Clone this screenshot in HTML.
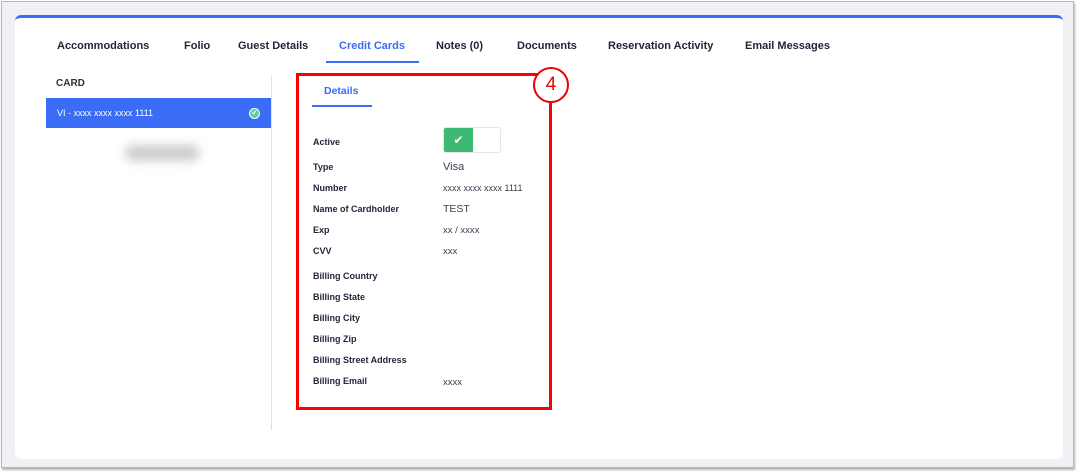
<!DOCTYPE html>
<html><head><style>
*{margin:0;padding:0;box-sizing:border-box}
body{width:1077px;height:472px;background:#fff;font-family:"Liberation Sans",sans-serif;position:relative;overflow:hidden;color:#1e2538}
.frame{position:absolute;left:1px;top:1px;width:1073px;height:467px;background:#f0f1f4;border:1px solid #b8b8b8;box-shadow:1px 2px 2px rgba(0,0,0,.3)}
.card{position:absolute;left:15px;top:15px;width:1048px;height:444px;background:#fff;border-top:3px solid #3b6cf6;border-radius:6px}
.a{position:absolute;white-space:nowrap}
.tab{font-size:11px;font-weight:bold;top:40px;color:#1e2538}
.lbl{font-size:9px;font-weight:bold;left:313px;color:#1e2538}
.val{font-size:9.5px;left:443px;color:#3a4050}
</style></head><body>
<div class="frame"></div>
<div class="card"></div>
<div class="a tab" style="left:57px">Accommodations</div>
<div class="a tab" style="left:184px">Folio</div>
<div class="a tab" style="left:238px">Guest Details</div>
<div class="a tab" style="left:339px;color:#3b6cf6">Credit Cards</div>
<div class="a" style="left:326px;top:61px;width:93px;height:2px;background:#3b6cf6"></div>
<div class="a tab" style="left:436px">Notes (0)</div>
<div class="a tab" style="left:517px">Documents</div>
<div class="a tab" style="left:608px">Reservation Activity</div>
<div class="a tab" style="left:745px">Email Messages</div>
<div class="a" style="left:56px;top:78px;font-size:10px;font-weight:bold;color:#333">CARD</div>
<div class="a" style="left:46px;top:98px;width:225px;height:30px;background:#3b6cf6"></div>
<div class="a" style="left:57px;top:108px;font-size:9px;color:#fff">VI - xxxx xxxx xxxx 1111</div>
<div class="a" style="left:249px;top:108px;width:11px;height:11px;border-radius:50%;background:#5bd0a0;border:1px solid #fff;color:#fff;font-size:7px;line-height:9px;text-align:center">✔</div>
<div class="a" style="left:125px;top:145px;width:75px;height:16px;background:#ccc;border-radius:8px;filter:blur(5px)"></div>
<div class="a" style="left:271px;top:75px;width:1px;height:355px;background:#e2e2e2"></div>
<div class="a" style="left:296px;top:73px;width:256px;height:337px;border:3px solid #f00"></div>
<div class="a" style="left:533px;top:67px;width:36px;height:36px;border-radius:50%;border:2px solid #e00;background:#fff;font-size:19px;color:#e00;text-align:center;line-height:32px">4</div>
<div class="a" style="left:324px;top:85px;font-size:10.5px;font-weight:bold;color:#3b6cf6">Details</div>
<div class="a" style="left:312px;top:105px;width:60px;height:2px;background:#3b6cf6"></div>
<div class="a lbl" style="top:137px">Active</div>
<div class="a" style="left:443px;top:127px;width:58px;height:26px;border:1px solid #e4e4e4;border-radius:3px;background:#fff;overflow:hidden"><div style="width:29px;height:100%;background:#3db872;color:#fff;font-size:12px;text-align:center;line-height:24px">✔</div></div>
<div class="a lbl" style="top:162px">Type</div><div class="a val" style="top:161px;font-size:11px">Visa</div>
<div class="a lbl" style="top:183px">Number</div><div class="a val" style="top:183px;font-size:9px">xxxx xxxx xxxx 1111</div>
<div class="a lbl" style="top:204px">Name of Cardholder</div><div class="a val" style="top:203px;font-size:10.5px">TEST</div>
<div class="a lbl" style="top:225px">Exp</div><div class="a val" style="top:225px">xx / xxxx</div>
<div class="a lbl" style="top:246px">CVV</div><div class="a val" style="top:246px">xxx</div>
<div class="a lbl" style="top:271px">Billing Country</div>
<div class="a lbl" style="top:292px">Billing State</div>
<div class="a lbl" style="top:313px">Billing City</div>
<div class="a lbl" style="top:334px">Billing Zip</div>
<div class="a lbl" style="top:355px">Billing Street Address</div>
<div class="a lbl" style="top:376px">Billing Email</div><div class="a val" style="top:377px">xxxx</div>
</body></html>
